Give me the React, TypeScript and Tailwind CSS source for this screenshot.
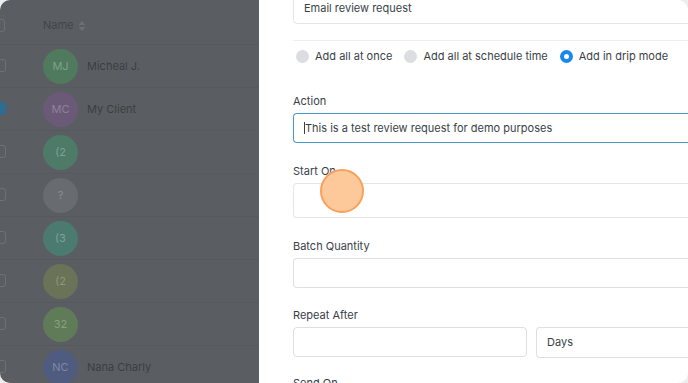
interface Row {
  initials: string;
  name?: string;
  bg: string;
  fg: string;
  checked?: boolean;
}

const rows: Row[] = [
  { initials: 'MJ', name: 'Micheal J.', bg: 'bg-[#4f7a5e]', fg: 'text-[#7fa08a]' },
  { initials: 'MC', name: 'My Client', bg: 'bg-[#6a5a78]', fg: 'text-[#8f809c]', checked: true },
  { initials: '(2', bg: 'bg-[#4e7a68]', fg: 'text-[#7fa394]' },
  { initials: '?', bg: 'bg-[#686c70]', fg: 'text-[#8a8e92]' },
  { initials: '(3', bg: 'bg-[#4b7a70]', fg: 'text-[#7ba39a]' },
  { initials: '(2', bg: 'bg-[#6a7258]', fg: 'text-[#8f977c]' },
  { initials: '32', bg: 'bg-[#5f7b58]', fg: 'text-[#88a180]' },
  { initials: 'NC', bg: 'bg-[#4f5c80]', fg: 'text-[#7d88a6]', name: 'Nana Charly' },
];

function Label({ children }: { children: string }) {
  return <div className="text-[11px] leading-[16px] text-[#3a4049] mb-[4px]">{children}</div>;
}

function Radio({ label, active }: { label: string; active?: boolean }) {
  return (
    <div className="flex items-center gap-[6px] whitespace-nowrap shrink-0">
      {active ? (
        <span className="w-[13px] h-[13px] rounded-full bg-[#1a86f0] flex items-center justify-center">
          <span className="w-[5px] h-[5px] rounded-full bg-white" />
        </span>
      ) : (
        <span className="w-[13px] h-[13px] rounded-full bg-[#dcdde1]" />
      )}
      <span className="text-[11px] leading-[16px] text-[#3a3f47]">{label}</span>
    </div>
  );
}

function SortIcon() {
  return (
    <svg width="8" height="12" viewBox="0 0 8 12" className="text-[#6b7074]">
      <path d="M4 1 L7.5 5 H0.5 Z" fill="currentColor" />
      <path d="M4 11 L7.5 7 H0.5 Z" fill="currentColor" />
    </svg>
  );
}

export default function App() {
  return (
    <div className="w-[688px] h-[383px] overflow-hidden bg-[#eceef0] font-['Inter',sans-serif]">
      <div className="flex h-full rounded-[10px] overflow-hidden">
        {/* dimmed table */}
        <div className="w-[259px] shrink-0 bg-[#5a5e62]">
          <div className="flex items-center h-[45px] pt-[7px] pl-[43px] gap-[4px] relative border-b border-[#565a5e]">
            <span className="absolute left-[-3px] top-[19px] w-[8px] h-[13px] rounded-[3px] border border-[#6d7175]" />
            <span className="text-[11px] text-[#40454a]">Name</span>
            <SortIcon />
          </div>
          {rows.map((r, i) => (
            <div
              key={i}
              className="h-[43px] flex items-center pl-[43px] gap-[9px] border-b border-[#565a5e] relative"
            >
              <span
                className={`absolute left-[-3px] top-[14px] w-[9px] h-[13px] rounded-[3px] ${
                  r.checked ? 'bg-[#2e6c92]' : 'border border-[#6d7175]'
                }`}
              />
              <span
                className={`w-[35px] h-[35px] rounded-full ${r.bg} ${r.fg} flex items-center justify-center text-[11px]`}
              >
                {r.initials}
              </span>
              {r.name && <span className="text-[11px] text-[#3a3e42]">{r.name}</span>}
            </div>
          ))}
        </div>

        {/* form panel */}
        <div className="flex-1 bg-white pl-[34px] min-w-0">
          <div className="mt-[-10px] h-[34px] border border-[#e3e5e8] border-r-0 rounded-l-[5px] flex items-end pb-[8px] pl-[10px] text-[11px] leading-[14px] text-[#3a3f47]">
            Email review request
          </div>
          <div className="mt-[16px] border-t border-[#eceef0]" />
          <div className="flex items-center gap-[12px] mt-[7px] pl-[3px]">
            <Radio label="Add all at once" />
            <Radio label="Add all at schedule time" />
            <Radio label="Add in drip mode" active />
          </div>

          <div className="mt-[29px]">
            <Label>Action</Label>
            <div className="h-[30px] border border-[#4b97c9] border-r-0 rounded-l-[4px] flex items-center pl-[10px] text-[11px] text-[#3a3f47] whitespace-nowrap">
              <span className="w-px h-[12px] bg-[#3a3f47]" />
              This is a test review request for demo purposes
            </div>
          </div>

          <div className="mt-[20px] relative">
            <Label>Start On</Label>
            <div className="h-[35px] border border-[#e3e5e8] border-r-0 rounded-l-[4px]" />
            <span className="absolute left-[27px] top-[6px] w-[44px] h-[44px] rounded-full bg-[#fdc99a] border-2 border-[#f9a05a]" />
          </div>

          <div className="mt-[20px]">
            <Label>Batch Quantity</Label>
            <div className="h-[30px] border border-[#dcdfe3] border-r-0 rounded-l-[4px]" />
          </div>

          <div className="mt-[19px]">
            <Label>Repeat After</Label>
            <div className="flex gap-[9px]">
              <div className="w-[234px] h-[30px] border border-[#dcdfe3] rounded-[4px]" />
              <div className="flex-1 h-[31px] border border-[#dcdfe3] border-r-0 rounded-l-[4px] flex items-center pl-[10px] text-[11px] text-[#3a3f47]">
                Days
              </div>
            </div>
          </div>

          <div className="mt-[17px]">
            <Label>Send On</Label>
          </div>
        </div>
      </div>
    </div>
  );
}
